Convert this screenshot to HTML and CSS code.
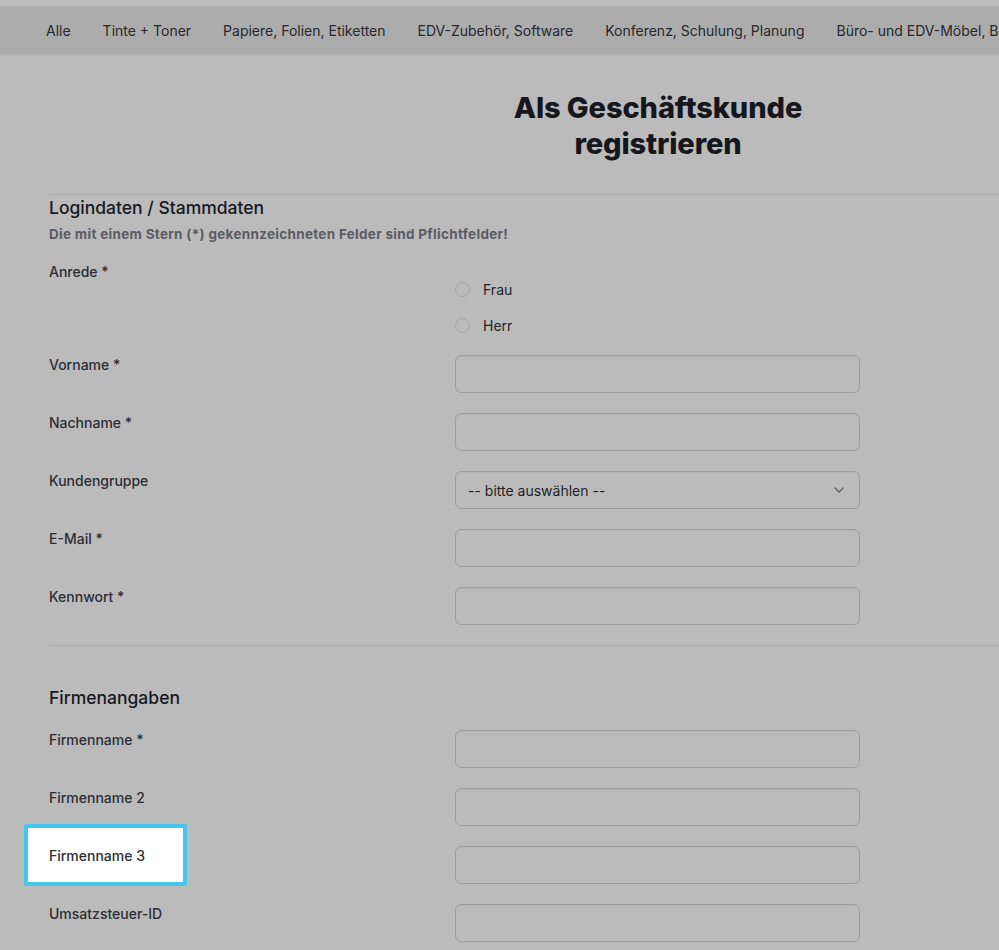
FILE: index.html
```html
<!DOCTYPE html>
<html lang="de">
<head>
<meta charset="utf-8">
<title>Als Geschäftskunde registrieren</title>
<link rel="stylesheet" href="styles.css">
</head>
<body>
<div class="topstrip"></div>
<nav class="cats">
  <a>Alle</a>
  <a>Tinte + Toner</a>
  <a>Papiere, Folien, Etiketten</a>
  <a>EDV-Zubehör, Software</a>
  <a>Konferenz, Schulung, Planung</a>
  <a>Büro- und EDV-Möbel, Beleuchtung</a>
</nav>
<main class="page">
  <h1 class="title">Als Geschäftskunde registrieren</h1>
  <hr class="divider first">
  <h2 class="section">Logindaten / Stammdaten</h2>
  <p class="hint">Die mit einem Stern (*) gekennzeichneten Felder sind Pflichtfelder!</p>

  <div class="row row-radio">
    <span class="label">Anrede *</span>
    <div class="radios">
      <label class="radio"><span class="dot"></span>Frau</label>
      <label class="radio"><span class="dot"></span>Herr</label>
    </div>
  </div>
  <div class="row"><span class="label">Vorname *</span><div class="input"></div></div>
  <div class="row"><span class="label">Nachname *</span><div class="input"></div></div>
  <div class="row"><span class="label">Kundengruppe</span>
    <div class="input select"><span>-- bitte auswählen --</span>
      <svg class="chev" width="12" height="8" viewBox="0 0 12 8"><path d="M2 2l4 4 4-4" fill="none" stroke="#5e5e63" stroke-width="1.4" stroke-linecap="round" stroke-linejoin="round"/></svg>
    </div>
  </div>
  <div class="row"><span class="label">E-Mail *</span><div class="input"></div></div>
  <div class="row"><span class="label">Kennwort *</span><div class="input"></div></div>

  <hr class="divider second">
  <h2 class="section">Firmenangaben</h2>
  <div class="row row-after-head"><span class="label">Firmenname *</span><div class="input"></div></div>
  <div class="row"><span class="label">Firmenname 2</span><div class="input"></div></div>
  <div class="row"><span class="label hl">Firmenname 3</span><div class="input"></div></div>
  <div class="row"><span class="label">Umsatzsteuer-ID</span><div class="input"></div></div>
</main>
</body>
</html>
```
FILE: styles.css
```css
html, body {
  margin: 0;
  padding: 0;
}
body {
  background: #bbbbbb;
  font-family: Inter, "Noto Sans", "Liberation Sans", sans-serif;
  color: #2b2b31;
  overflow: hidden;
  width: 999px;
  height: 950px;
}
.topstrip {
  height: 6px;
  background: #bdbdbd;
}
.cats {
  height: 48px;
  background: #acacac;
  box-shadow: 0 1px 2px rgba(0,0,0,0.08);
  display: flex;
  align-items: center;
  gap: 32px;
  padding-left: 46px;
  white-space: nowrap;
  font-size: 14px;
  color: #27272d;
  overflow: hidden;
}
.cats a {
  flex: none;
}
.page {
  width: 1218px;
  margin-left: 49px;
}
.title {
  max-width: 330px;
  margin: 36px auto 0;
  text-align: center;
  font-size: 29px;
  line-height: 36px;
  font-weight: 800;
  color: #16161d;
  letter-spacing: -0.1px;
}
.divider {
  border: 0;
  height: 1px;
  background: #a9a9a9;
  margin: 0;
}
.divider.first {
  margin-top: 32px;
}
.divider.second {
  margin-top: 20px;
}
.section {
  margin: 0;
  padding-top: 1px;
  font-size: 17.5px;
  line-height: 24px;
  font-weight: 500;
  color: #18181f;
}
.second + .section {
  margin-top: 40px;
  padding-top: 0;
}
.hint {
  margin: 5px 0 0;
  font-size: 13.5px;
  line-height: 18px;
  font-weight: 700;
  letter-spacing: 0.3px;
  color: #5b5b63;
}
.row {
  display: grid;
  grid-template-columns: 406px 405px;
  margin-top: 20px;
}
.row-radio {
  margin-top: 19px;
}
.row-after-head {
  margin-top: 20px;
}
.row-radio + .row {
  margin-top: 12px;
}
.label {
  font-size: 14px;
  line-height: 20px;
  font-weight: 500;
  color: #2d2d33;
}
.input {
  height: 38px;
  box-sizing: border-box;
  border: 1px solid #9e9e9e;
  border-radius: 6px;
  box-shadow: inset 0 1px 1px rgba(0,0,0,0.04);
}
.select {
  display: flex;
  align-items: center;
  justify-content: space-between;
  padding: 0 14px 0 12px;
  font-size: 14px;
  color: #1f1f25;
}
.chev {
  display: block;
}
.radios {
  padding-top: 9px;
  display: flex;
  flex-direction: column;
}
.radio {
  height: 36px;
  display: flex;
  align-items: center;
  gap: 13px;
  font-size: 14px;
  color: #222228;
}
.dot {
  width: 15px;
  height: 15px;
  box-sizing: border-box;
  border: 1px solid #a4a4a4;
  border-radius: 50%;
}
.hl {
  position: relative;
  z-index: 0;
  justify-self: start;
}
.hl::before {
  content: "";
  position: absolute;
  z-index: -1;
  left: -25px;
  top: -22px;
  width: 163px;
  height: 62px;
  box-sizing: border-box;
  background: #ffffff;
  border: 4px solid #45c6ef;
  border-radius: 2px;
}
```
